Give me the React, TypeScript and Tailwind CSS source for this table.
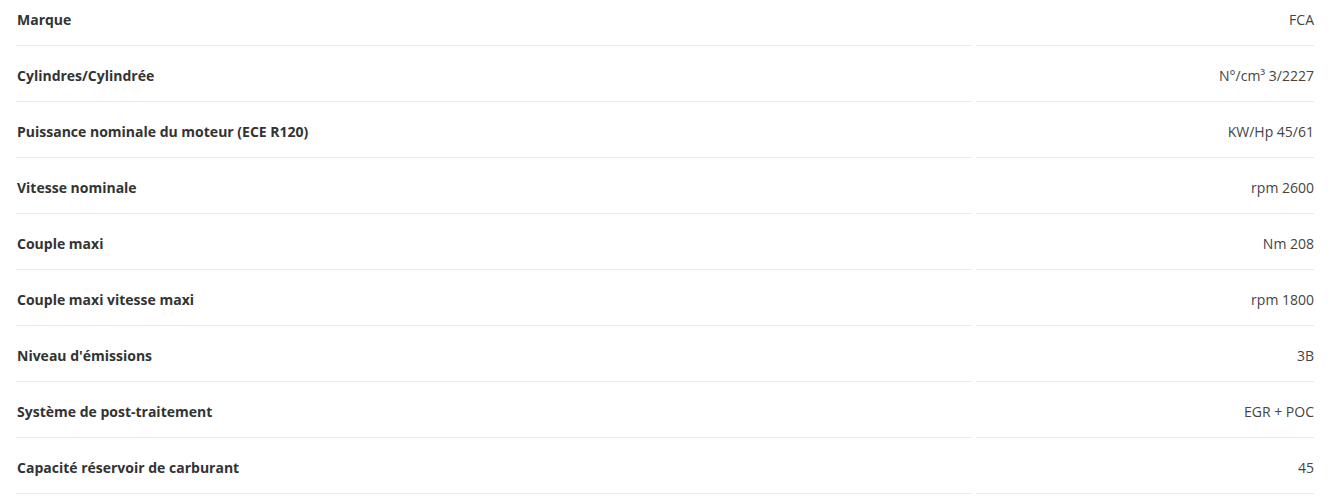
import React from "react";

const specs: [string, string][] = [
  ["Marque", "FCA"],
  ["Cylindres/Cylindrée", "N°/cm³ 3/2227"],
  ["Puissance nominale du moteur (ECE R120)", "KW/Hp 45/61"],
  ["Vitesse nominale", "rpm 2600"],
  ["Couple maxi", "Nm 208"],
  ["Couple maxi vitesse maxi", "rpm 1800"],
  ["Niveau d'émissions", "3B"],
  ["Système de post-traitement", "EGR + POC"],
  ["Capacité réservoir de carburant", "45"],
];

export default function App() {
  return (
    <div
      className="w-[1338px] h-[496px] overflow-hidden bg-white pl-4"
      style={{ fontFamily: '"Open Sans", "Liberation Sans", sans-serif' }}
    >
      <div className="-mt-[10px] grid grid-cols-[956px_338px] gap-x-1 text-[14px] leading-5">
        {specs.map(([label, value]) => (
          <React.Fragment key={label}>
            <div className="border-b border-[#e9e9e9] pt-5 pb-[15px] pl-px font-bold text-[#333333]">
              {label}
            </div>
            <div className="border-b border-[#e9e9e9] pt-5 pb-[15px] text-right text-[#444444]">
              {value}
            </div>
          </React.Fragment>
        ))}
      </div>
    </div>
  );
}
